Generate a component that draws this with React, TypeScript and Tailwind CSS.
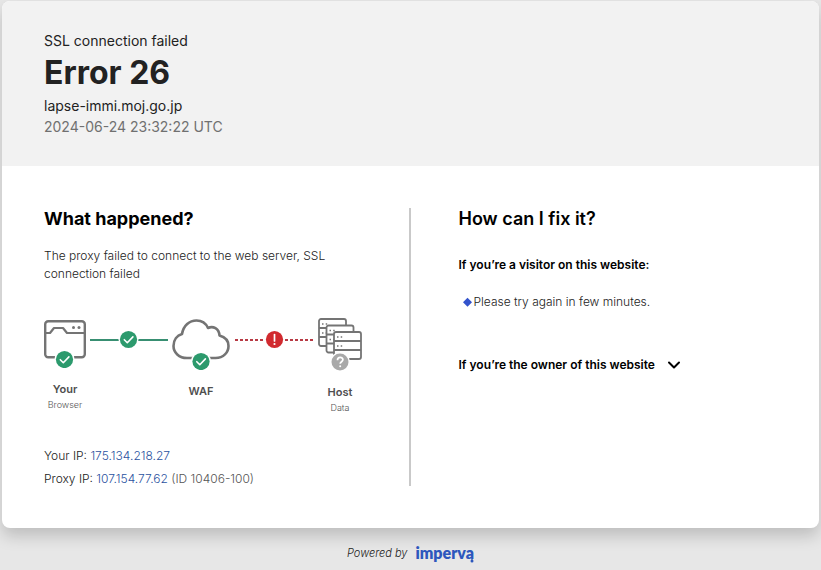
import React, { useState } from 'react';

const CheckBadge: React.FC<{ cx: number; cy: number }> = ({ cx, cy }) => (
  <g>
    <circle cx={cx} cy={cy} r="10" fill="#fff" />
    <circle cx={cx} cy={cy} r="8.6" fill="#2c9a6d" />
    <path
      d={`M${cx - 4.2} ${cy + 0.2}l3 3 5.6-5.8`}
      fill="none"
      stroke="#fff"
      strokeWidth="1.6"
      strokeLinecap="round"
      strokeLinejoin="round"
    />
  </g>
);

const BrowserIcon: React.FC = () => (
  <svg width="42" height="51" viewBox="0 0 42 51" fill="none" aria-hidden="true">
    <rect x="1.2" y="4.2" width="39.6" height="36" rx="3" stroke="#747474" strokeWidth="2.4" />
    <path d="M1 16h5l4-5h9l4 5h18" stroke="#747474" strokeWidth="2.2" strokeLinejoin="round" />
    <circle cx="29.5" cy="10.5" r="1.5" fill="#747474" />
    <circle cx="35" cy="10.5" r="1.5" fill="#747474" />
    <CheckBadge cx={20.5} cy={42.5} />
  </svg>
);

const CloudIcon: React.FC = () => (
  <svg width="58" height="53" viewBox="0 0 58 53" fill="none" aria-hidden="true">
    <path
      d="M15 41C7 41 1.500 35.500 1.500 29c0-6 3.500-10.500 8.500-12C11.500 8.500 17.500 3.500 24.500 3.500c5.500 0 9.500 3 11.500 7.500 5-2.500 11 .5 11.500 7.500 5.500 1.500 9 5.500 9 10.500 0 6.500-5 12-13 12z"
      stroke="#747474"
      strokeWidth="2.6"
      strokeLinejoin="round"
    />
    <CheckBadge cx={29} cy={44.5} />
  </svg>
);

const ServerRack: React.FC<{ x: number; y: number }> = ({ x, y }) => (
  <g>
    <rect x={x} y={y} width="27" height="27" rx="2" fill="#fff" stroke="#747474" strokeWidth="1.8" />
    <path d={`M${x} ${y + 9}h27M${x} ${y + 18}h27`} stroke="#747474" strokeWidth="1.8" />
    <path
      d={`M${x + 3} ${y + 5}h1.500m2.200 0h1.500M${x + 3} ${y + 14}h1.500m2.200 0h1.500`}
      stroke="#747474"
      strokeWidth="1.500"
    />
  </g>
);

const HostIcon: React.FC = () => (
  <svg width="44" height="54" viewBox="0 0 44 54" fill="none" aria-hidden="true">
    <ServerRack x={1} y={2} />
    <ServerRack x={8.5} y={8.5} />
    <ServerRack x={16} y={15} />
    <circle cx="22" cy="45" r="10" fill="#fff" />
    <circle cx="22" cy="45" r="8.500" fill="#a9a9a9" />
    <path d="M19.500 43.200c0-3.600 5.400-3.600 5.400-.4 0 1.900-2.700 2-2.700 4" stroke="#fff" strokeWidth="1.700" />
    <circle cx="22.200" cy="49.200" r="1" fill="#fff" />
  </svg>
);

const OkLink: React.FC = () => (
  <svg width="78" height="44" viewBox="0 0 78 44" fill="none" aria-hidden="true">
    <path d="M0 23h78" stroke="#388f72" strokeWidth="2" />
    <CheckBadge cx={38.5} cy={22.5} />
  </svg>
);

const FailedLink: React.FC = () => (
  <svg width="80" height="44" viewBox="0 0 80 44" fill="none" aria-hidden="true">
    <path d="M1 23h79" stroke="#b83a44" strokeWidth="2" strokeDasharray="3 2" />
    <circle cx="40.500" cy="22.500" r="10" fill="#fff" />
    <circle cx="40.500" cy="22.500" r="8.600" fill="#d12a2f" />
    <path d="M40.500 17.500v6.500" stroke="#fff" strokeWidth="1.700" strokeLinecap="round" />
    <circle cx="40.500" cy="27" r="1.100" fill="#fff" />
  </svg>
);

interface NodeProps {
  title: string;
  detail?: string;
  children: React.ReactNode;
}

const DiagramNode: React.FC<NodeProps> = ({ title, detail, children }) => (
  <div className="flex flex-col items-center text-center">
    {children}
    <p className="mt-[13px] text-[11px] leading-4 font-semibold text-[#4f4f4f]">{title}</p>
    {detail && <p className="text-[9px] leading-4 font-light text-[#555]">{detail}</p>}
  </div>
);

export default function App() {
  const [ownerOpen, setOwnerOpen] = useState(false);

  return (
    <div className="min-h-screen bg-[#e7e7e7] px-0.5 pt-px font-['Inter',sans-serif] text-[#222]">
      <main className="overflow-hidden rounded-lg bg-white shadow-[0_8px_16px_rgba(0,0,0,0.18)]">
        <header className="bg-[#f2f2f2] px-[42px] pt-[30px] pb-[29px]">
          <p className="text-sm leading-5">SSL connection failed</p>
          <h1 className="text-[32px] leading-11 font-bold">Error 26</h1>
          <p className="text-sm leading-[21px]">lapse-immi.moj.go.jp</p>
          <p className="text-sm leading-[21px] text-[#707070]">2024-06-24 23:32:22 UTC</p>
        </header>

        <div className="grid grid-cols-2 py-[42px]">
          <section className="border-r-2 border-[#c9c9c9] pr-10 pl-[42px]">
            <h2 className="text-lg leading-[22px] font-bold text-black">What happened?</h2>
            <p className="mt-[17px] max-w-[300px] text-xs leading-[18px] font-light">
              The proxy failed to connect to the web server, SSL connection failed
            </p>

            <div className="mt-[34px] flex items-start gap-1">
              <DiagramNode title="Your" detail="Browser">
                <BrowserIcon />
              </DiagramNode>
              <OkLink />
              <DiagramNode title="WAF">
                <CloudIcon />
              </DiagramNode>
              <FailedLink />
              <DiagramNode title="Host" detail="Data">
                <HostIcon />
              </DiagramNode>
            </div>

            <div className="mt-7 -mb-1 text-xs leading-[23px] font-light">
              <p>
                Your IP: <span className="text-[#2b52a0]">175.134.218.27</span>
              </p>
              <p>
                Proxy IP: <span className="text-[#2b52a0]">107.154.77.62</span>{' '}
                <span className="text-[#555]">(ID 10406-100)</span>
              </p>
            </div>
          </section>

          <section className="pr-10 pl-12">
            <h2 className="text-lg leading-[22px] font-semibold text-black">How can I fix it?</h2>
            <h3 className="mt-[26px] text-xs leading-[18px] font-semibold text-black">
              If you’re a visitor on this website:
            </h3>
            <ul className="mt-[19px] pl-1">
              <li className="flex items-center gap-0.5 text-xs leading-[18px] font-light">
                <svg width="9" height="10" viewBox="0 0 9 10" aria-hidden="true">
                  <path d="M4.500 .8L9 5.300 4.500 9.800 0 5.300z" fill="#3353cc" />
                </svg>
                Please try again in few minutes.
              </li>
            </ul>
            <button
              type="button"
              aria-expanded={ownerOpen}
              onClick={() => setOwnerOpen(!ownerOpen)}
              className="mt-[45px] flex items-center gap-3 text-xs leading-[18px] font-semibold text-black"
            >
              If you’re the owner of this website
              <svg
                width="14"
                height="10"
                viewBox="0 0 14 10"
                fill="none"
                aria-hidden="true"
                className={ownerOpen ? 'rotate-180' : ''}
              >
                <path d="M2 2.500l5 5 5-5" stroke="#000" strokeWidth="2" strokeLinecap="round" strokeLinejoin="round" />
              </svg>
            </button>
          </section>
        </div>
      </main>

      <footer className="flex items-center justify-center gap-2 pt-[15px]">
        <span className="text-[11px] leading-5 font-light italic">Powered by</span>
        <a href="#" className="relative font-['Lato',sans-serif] text-base leading-5 font-extrabold text-[#2d57bd]">
          imperva
          <svg width="4" height="5" viewBox="0 0 4 5" aria-hidden="true" className="absolute right-0 bottom-0">
            <path d="M2 0v2" stroke="#2d57bd" strokeWidth="1.200" />
            <circle cx="2" cy="3" r="1.500" fill="#2d57bd" />
          </svg>
        </a>
      </footer>
    </div>
  );
}
